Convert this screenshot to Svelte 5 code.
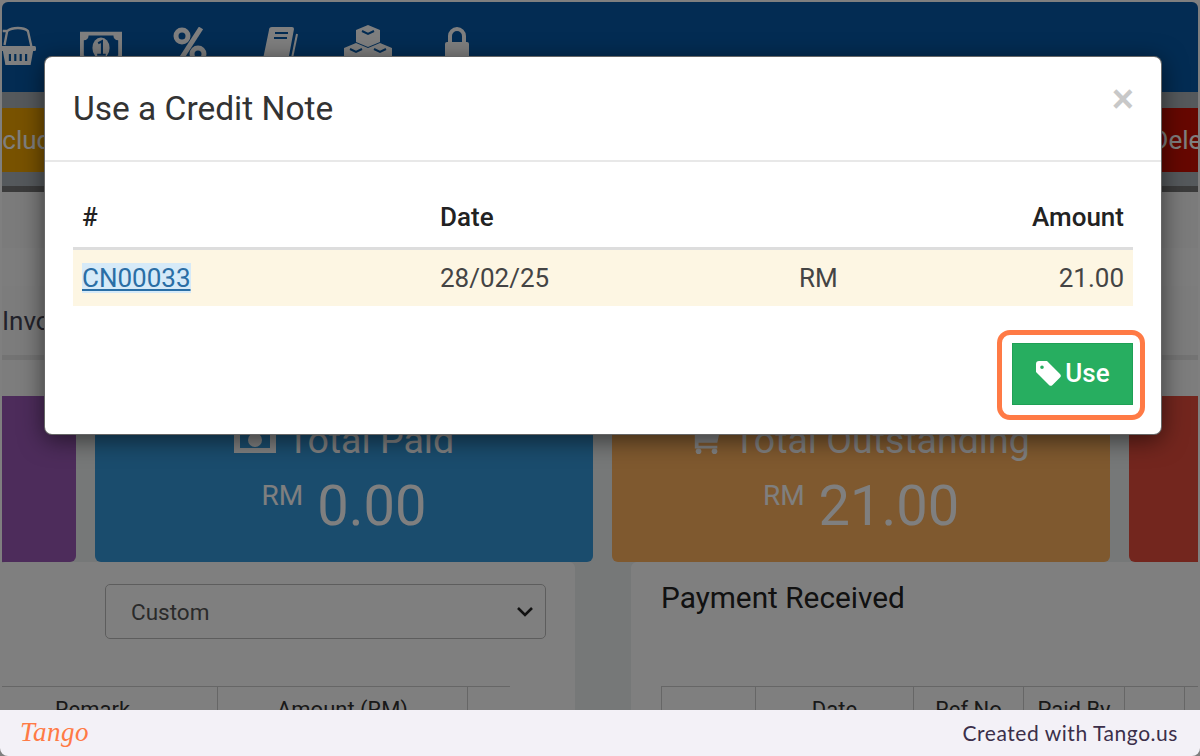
<script lang="ts">
  const cards = [
    { label: 'Total Invoice', amount: '21.00', cls: 'purple', icon: '' },
    { label: 'Total Paid', amount: '0.00', cls: 'blue', icon: 'money' },
    { label: 'Total Outstanding', amount: '21.00', cls: 'orange', icon: 'cart' },
    { label: 'Overdue', amount: '0.00', cls: 'red', icon: '' }
  ];
  const notes = [{ no: 'CN00033', date: '28/02/25', currency: 'RM', amount: '21.00' }];
</script>

<div class="shot">
  <div class="page">
    <header class="nav">
      <svg viewBox="0 0 40 40" width="36" height="40" preserveAspectRatio="none">
        <path d="M3 6h6 M8 6 C14 2 26 2 31 6 L35 22 M8 6 L5 20" fill="none" stroke="#fff" stroke-width="2.600" />
        <rect x="0" y="21" width="40" height="5" rx="1.500" fill="#fff" />
        <path fill="#fff" d="M3 25h34l-3 15H6z" />
        <path d="M11 29v7M17 29v7M23 29v7M29 29v7" stroke="#0758a6" stroke-width="2.400" />
      </svg>
      <svg class="money" viewBox="0 0 44 34" width="42" height="34">
        <path fill="#fff" fill-rule="evenodd" d="M0 0h44v34H0z M9 4c0 3-2 5-5 5v16c3 0 5 2 5 5h26c0-3 2-5 5-5V9c-3 0-5-2-5-5z" />
        <ellipse cx="22" cy="17" rx="9" ry="11" fill="#fff" />
        <path d="M19 12l4-2v14M18 24h9" stroke="#0758a6" stroke-width="2.200" fill="none" />
      </svg>
      <svg viewBox="0 0 34 36" width="34" height="36">
        <circle cx="9" cy="9" r="6" fill="none" stroke="#fff" stroke-width="5" />
        <circle cx="25" cy="27" r="6" fill="none" stroke="#fff" stroke-width="5" />
        <path d="M28 1L6 35" stroke="#fff" stroke-width="5" />
      </svg>
      <svg viewBox="0 0 36 38" width="36" height="38">
        <path fill="#fff" d="M10 1h20a2 2 0 012 2l-5 27H4a3 3 0 00-3 3L7 4a3 3 0 013-3z" />
        <path d="M13 7h13M12 12h13" stroke="#0758a6" stroke-width="2" />
        <path d="M35 8l-6 29" stroke="#fff" stroke-width="2" />
      </svg>
      <svg viewBox="0 0 48 40" width="48" height="40">
        <path fill="#fff" d="M24 0l12 5v12l-12 5-12-5V5zM12 18l12 5v12l-12 5L0 35V23zM36 18l12 5v12l-12 5-12-5V23z" />
        <path d="M18 6l6 3 6-3M6 24l6 3 6-3M30 24l6 3 6-3" stroke="#0758a6" stroke-width="2" fill="none" />
      </svg>
      <svg viewBox="0 0 26 36" width="26" height="36">
        <path d="M6 16V9a7 7 0 0114 0v7" fill="none" stroke="#fff" stroke-width="4" />
        <rect x="1" y="15" width="24" height="21" rx="2" fill="#fff" />
      </svg>
    </header>

    <div class="actions">
      <span class="btn yellow">Include</span>
      <span class="btn crimson">Delete</span>
    </div>
    <div class="rule"></div>

    <div class="strip one"></div>
    <div class="strip two"></div>
    <div class="strip tabs"><span>Invoice</span></div>
    <div class="strip three"></div>

    <section class="cards">
      {#each cards as card}
        <div class="card {card.cls}">
          <div class="card-label">
            {#if card.icon === 'money'}
              <svg viewBox="0 0 42 26" width="42" height="26">
                <path fill="#fff" fill-rule="evenodd" d="M0 0h42v26H0zM6 5v16h30V5z" />
                <circle cx="21" cy="13" r="7" fill="#fff" />
              </svg>
            {:else if card.icon === 'cart'}
              <svg viewBox="0 0 32 30" width="30" height="30">
                <path fill="#fff" d="M0 4h30l-3 14H7v3h20v3H3V6H0z" />
                <circle cx="7" cy="27" r="3" fill="#fff" />
                <circle cx="24" cy="27" r="3" fill="#fff" />
              </svg>
            {/if}
            {card.label}
          </div>
          <div class="card-amount"><sup>RM</sup> {card.amount}</div>
        </div>
      {/each}
    </section>

    <section class="panels">
      <div class="panel left">
        <div class="select">
          <span>Custom</span>
          <svg viewBox="0 0 18 12" width="18" height="12">
            <path d="M2 2l7 7 7-7" fill="none" stroke="#222" stroke-width="2.600" />
          </svg>
        </div>
        <div class="mini-table left-cols">
          <span>Remark</span>
          <span>Amount (RM)</span>
          <span></span>
        </div>
      </div>
      <div class="panel right">
        <h2>Payment Received</h2>
        <div class="mini-table right-cols">
          <span></span>
          <span>Date</span>
          <span>Ref No</span>
          <span>Paid By</span>
          <span></span>
        </div>
      </div>
    </section>
  </div>

  <div class="scrim"></div>

  <div class="modal">
    <div class="modal-head">
      <h1>Use a Credit Note</h1>
      <span class="close">×</span>
    </div>
    <div class="modal-body">
      <table>
        <thead>
          <tr>
            <th class="c-no">#</th>
            <th class="c-date">Date</th>
            <th class="c-cur"></th>
            <th class="c-amt">Amount</th>
          </tr>
        </thead>
        <tbody>
          {#each notes as note}
            <tr>
              <td class="c-no"><a href="#cn">{note.no}</a></td>
              <td>{note.date}</td>
              <td>{note.currency}</td>
              <td class="c-amt">{note.amount}</td>
            </tr>
          {/each}
        </tbody>
      </table>
      <div class="modal-foot">
        <button class="use">
          <svg viewBox="0 0 26 26" width="26" height="26">
            <path fill="#fff" d="M1 4a3 3 0 013-3h8l13 13a2.500 2.500 0 010 3.500L17.500 25a2.500 2.500 0 01-3.500 0L1 12zM7 5.500a1.800 1.800 0 100 3.600 1.800 1.800 0 000-3.600z" fill-rule="evenodd" />
          </svg>
          <span>Use</span>
        </button>
      </div>
    </div>
  </div>

  <div class="highlight"></div>

  <footer class="foot">
    <span class="logo">Tango</span>
    <span class="credit">Created with Tango.us</span>
  </footer>
</div>

<style>
  :global(body) {
    margin: 0;
    background: #fff;
  }
  .shot {
    position: relative;
    width: 1200px;
    height: 756px;
    overflow: hidden;
    font-family: Roboto, sans-serif;
    color: #333;
  }
  .page {
    margin: 2px 2px 0;
    height: 708px;
    overflow: hidden;
    background: #ecf0f1;
    border-radius: 6px 6px 0 0;
  }
  .nav {
    height: 90px;
    box-sizing: border-box;
    background: #0758a6;
    display: flex;
    align-items: center;
    padding: 23px 0 27px;
    margin-left: -2px;
  }
  .nav svg {
    flex: none;
  }
  .nav svg:nth-child(2) {
    margin-left: 44px;
  }
  .nav .money {
    margin-top: 5px;
  }
  .nav svg:nth-child(3) {
    margin-left: 51px;
  }
  .nav svg:nth-child(4) {
    margin-left: 55px;
  }
  .nav svg:nth-child(5) {
    margin-left: 46px;
  }
  .nav svg:nth-child(6) {
    margin-left: 52px;
  }
  .actions {
    padding: 16px 0 14px;
    background: #aab2b8;
    display: flex;
    justify-content: space-between;
    overflow: hidden;
  }
  .btn {
    width: 110px;
    height: 64px;
    flex: none;
    display: flex;
    align-items: center;
    justify-content: center;
    font-size: 26px;
    color: #fff;
  }
  .yellow {
    background: #f0a500;
    margin-left: -34px;
  }
  .crimson {
    background: #cc0f00;
    margin-right: -45px;
  }
  .rule {
    height: 6px;
    background: #777;
  }
  .strip {
    background: #f6f6f6;
  }
  .one {
    height: 56px;
  }
  .two {
    height: 38px;
    background: #fafafa;
  }
  .tabs {
    height: 69px;
    display: flex;
    align-items: center;
    font-size: 26px;
    color: #445;
    overflow: hidden;
    border-bottom: 5px solid #e6e6e6;
    background: #f8f8f8;
  }
  .three {
    height: 36px;
    background: #fafafa;
  }
  .cards {
    display: grid;
    grid-template-columns: repeat(4, 498px);
    gap: 19px;
    margin: 0 0 0 -424px;
  }
  .card {
    height: 166px;
    border-radius: 6px;
    color: #fff;
    text-align: center;
    box-sizing: border-box;
    padding-top: 24px;
  }
  .purple {
    background: #9b59b6;
  }
  .blue {
    background: #3498db;
  }
  .orange {
    background: #ffb25e;
  }
  .red {
    background: #e74c3c;
  }
  .card-label {
    font-size: 37.500px;
    line-height: 40px;
    display: flex;
    gap: 11px;
    align-items: center;
    justify-content: center;
  }
  .card-amount {
    font-size: 56px;
    line-height: 64px;
    margin-top: 14px;
  }
  .card-amount sup {
    font-size: 28px;
    vertical-align: 20px;
    line-height: 0;
  }
  .panels {
    display: flex;
    gap: 56px;
    margin-left: -2px;
  }
  .panel {
    background: #fff;
    border-radius: 6px;
    height: 170px;
    flex: none;
    box-sizing: border-box;
  }
  .panel.left {
    width: 575px;
    padding-top: 22px;
  }
  .panel.right {
    width: 600px;
    padding: 18px 0 0 30px;
  }
  .panel h2 {
    margin: 0;
    font-size: 29.800px;
    font-weight: 400;
    line-height: 36px;
    color: #222;
  }
  .select {
    margin-left: 105px;
    width: 441px;
    height: 55px;
    border: 1px solid #bbb;
    border-radius: 5px;
    display: flex;
    align-items: center;
    justify-content: space-between;
    padding: 0 11px 0 25px;
    box-sizing: border-box;
    font-size: 22.500px;
    color: #555;
  }
  .mini-table {
    display: grid;
    border-top: 1px solid #ccc;
    font-size: 22px;
    height: 50px;
    color: #333;
    text-align: center;
  }
  .mini-table span {
    border-right: 1px solid #ccc;
    padding-top: 10px;
  }
  .left-cols {
    margin: 47px 0 0 -32px;
    width: 542px;
    grid-template-columns: 250px 250px 42px;
  }
  .left-cols span:last-child {
    border-right: 0;
  }
  .right-cols {
    margin-top: 70px;
    grid-template-columns: 94px 158px 110px 101px 60px;
    border-left: 1px solid #ccc;
  }
  .scrim {
    position: absolute;
    inset: 0;
    background: rgba(0, 0, 0, 0.5);
  }
  .modal {
    position: absolute;
    left: 44px;
    top: 56px;
    width: 1118px;
    height: 379px;
    box-sizing: border-box;
    background: #fff;
    border-radius: 8px;
    border: 1px solid rgba(0, 0, 0, 0.6);
    box-shadow: 0 5px 25px rgba(0, 0, 0, 0.55);
  }
  .modal-head {
    height: 103px;
    border-bottom: 2px solid #e8e8e8;
    display: flex;
    justify-content: space-between;
    padding: 0 28px;
  }
  .modal-head h1 {
    margin: 32px 0 0;
    font-size: 33.500px;
    line-height: 40px;
    font-weight: 400;
    color: #333;
  }
  .close {
    font-size: 38px;
    font-weight: 700;
    color: #c8c8c8;
    line-height: 38px;
    margin: 23px -1px 0 0;
    font-family: "Liberation Sans", sans-serif;
  }
  .modal-body {
    padding: 28px 28px 0;
  }
  table {
    width: 1060px;
    border-collapse: collapse;
    table-layout: fixed;
    font-size: 26px;
  }
  th {
    box-sizing: border-box;
    height: 58px;
    text-align: left;
    font-weight: 500;
    font-size: 26px;
    color: #222;
    padding: 0 9px 2px 10px;
    border-bottom: 3px solid #ddd;
  }
  td {
    box-sizing: border-box;
    height: 58px;
    padding: 0 9px 0 10px;
    background: #fdf6e3;
    color: #444;
  }
  th.c-no,
  td.c-no {
    padding-left: 9px;
  }
  .c-no {
    width: 357px;
  }
  .c-date {
    width: 359px;
  }
  th.c-amt,
  td.c-amt {
    text-align: right;
  }
  a {
    color: #2a6ea5;
    background: #d6eaf8;
  }
  .modal-foot {
    display: flex;
    justify-content: flex-end;
    margin-top: 37px;
  }
  .use {
    width: 121px;
    height: 62px;
    border: 1px solid #1fa055;
    background: #27ae60;
    color: #fff;
    font: 500 26px Roboto, sans-serif;
    display: flex;
    align-items: center;
    justify-content: center;
    gap: 4px;
    padding: 0 0 2px;
  }
  .highlight {
    position: absolute;
    left: 997px;
    top: 330px;
    width: 148px;
    height: 90px;
    box-sizing: border-box;
    border: 5px solid #ff7a45;
    border-radius: 13px;
  }
  .foot {
    position: absolute;
    left: 0;
    right: 0;
    bottom: 0;
    height: 46px;
    background: #f3f1f7;
    border-radius: 0 0 8px 8px;
    display: flex;
    align-items: center;
    justify-content: space-between;
    padding: 0 22px 2px 20px;
    box-sizing: border-box;
  }
  .logo {
    font: italic 400 27px "Liberation Serif", serif;
    color: #ff7a45;
    letter-spacing: 0.5px;
  }
  .credit {
    font: 400 21px Lato, sans-serif;
    color: #3b2f4a;
    letter-spacing: 0.55px;
  }
</style>
